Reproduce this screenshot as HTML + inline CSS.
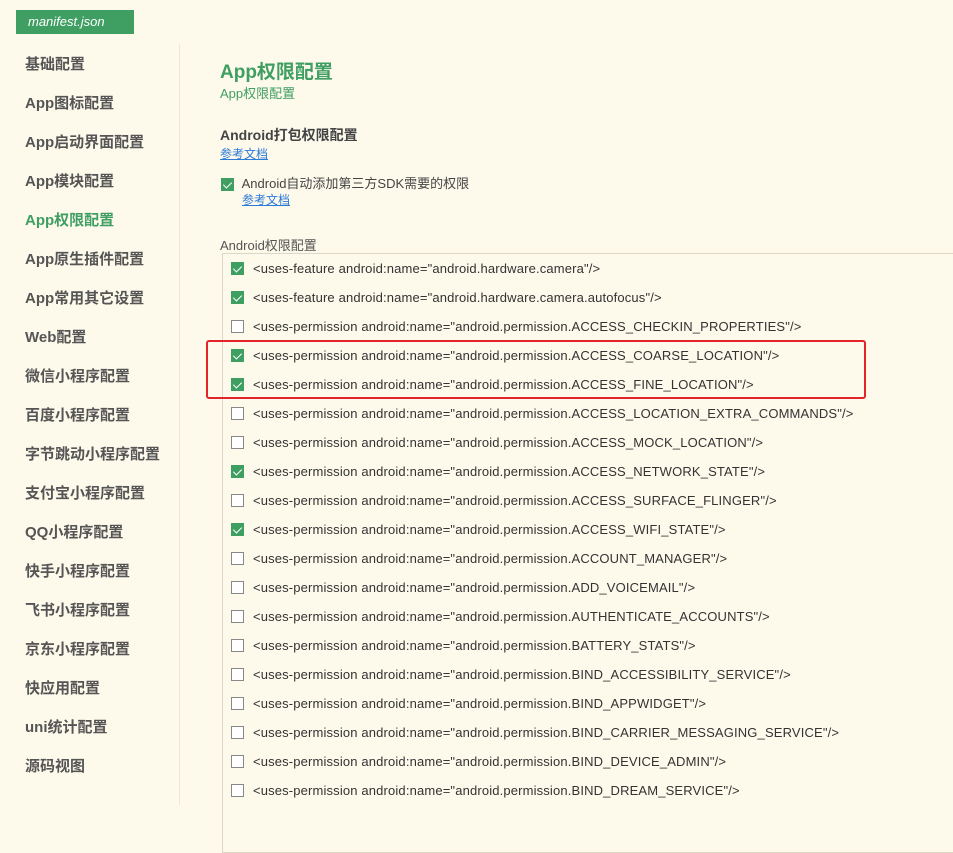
<!DOCTYPE html>
<html><head><meta charset="utf-8"><style>
body{margin:0;width:953px;height:805px;overflow:hidden;background:#fdf9eb;font-family:"Liberation Sans","Noto Sans CJK SC",sans-serif;position:relative;color:#333}
.tab{position:absolute;left:16px;top:10px;width:118px;height:24px;background:#3f9e62;color:#fff;font-style:italic;font-size:13px;line-height:24px;padding-left:12px;box-sizing:border-box}
.side{position:absolute;left:25px;top:54px}
.side div{height:39px;line-height:21px;font-size:15px;font-weight:bold;color:#555}
.side .on{color:#3f9e62}
.vl{position:absolute;left:179px;top:44px;width:1px;height:761px;background:#eee8d6}
.a{position:absolute;font-size:13px}
.lk{color:#2a7ad8;text-decoration:underline;font-size:12px}
.cb{display:inline-block;width:13px;height:13px;box-sizing:border-box;border:1px solid #888;background:#fff;vertical-align:middle;position:relative}
.cb.c{background:#3f9e62;border-color:#3f9e62}
.cb.c:after{content:"";position:absolute;left:3px;top:1px;width:4px;height:7px;border:solid #fff;border-width:0 1.5px 1.5px 0;transform:rotate(45deg)}
.box{position:absolute;left:222px;top:253px;width:760px;height:600px;border:1px solid #ddd8c4;box-sizing:border-box}
.row{position:absolute;left:231px;height:16px;font-size:13px;line-height:16px;white-space:nowrap;color:#333;letter-spacing:0.15px}
.row .cb{position:absolute;left:0;top:1px}
.row span.t{position:absolute;left:22px;top:0}
.red{position:absolute;left:206px;top:340px;width:660px;height:59px;border:2px solid #e3252b;border-radius:3px;box-sizing:border-box}
</style></head><body>
<div class="tab">manifest.json</div>
<div class="vl"></div>
<div class="side">
<div>基础配置</div><div>App图标配置</div><div>App启动界面配置</div><div>App模块配置</div><div class="on">App权限配置</div><div>App原生插件配置</div><div>App常用其它设置</div><div>Web配置</div><div>微信小程序配置</div><div>百度小程序配置</div><div>字节跳动小程序配置</div><div>支付宝小程序配置</div><div>QQ小程序配置</div><div>快手小程序配置</div><div>飞书小程序配置</div><div>京东小程序配置</div><div>快应用配置</div><div>uni统计配置</div><div>源码视图</div>
</div>
<div class="a" style="left:220px;top:57px;font-size:19px;font-weight:bold;color:#3f9e62">App权限配置</div>
<div class="a" style="left:220px;top:83px;color:#3f9e62">App权限配置</div>
<div class="a" style="left:220px;top:125px;font-size:14px;font-weight:bold;color:#444">Android打包权限配置</div>
<div class="a" style="left:220px;top:145px"><span class="lk">参考文档</span></div>
<div class="a" style="left:221px;top:173px;color:#444"><span class="cb c"></span> <span style="margin-left:4px">Android自动添加第三方SDK需要的权限</span></div>
<div class="a" style="left:242px;top:191px"><span class="lk">参考文档</span></div>
<div class="a" style="left:220px;top:235px;color:#555">Android权限配置</div>
<div class="box"></div>
<div id="rows"></div>
<div class="red"></div>
<script>
var items=[[1,'<uses-feature android:name="android.hardware.camera"/>'],[1,'<uses-feature android:name="android.hardware.camera.autofocus"/>'],[0,'ACCESS_CHECKIN_PROPERTIES'],[1,'ACCESS_COARSE_LOCATION'],[1,'ACCESS_FINE_LOCATION'],[0,'ACCESS_LOCATION_EXTRA_COMMANDS'],[0,'ACCESS_MOCK_LOCATION'],[1,'ACCESS_NETWORK_STATE'],[0,'ACCESS_SURFACE_FLINGER'],[1,'ACCESS_WIFI_STATE'],[0,'ACCOUNT_MANAGER'],[0,'ADD_VOICEMAIL'],[0,'AUTHENTICATE_ACCOUNTS'],[0,'BATTERY_STATS'],[0,'BIND_ACCESSIBILITY_SERVICE'],[0,'BIND_APPWIDGET'],[0,'BIND_CARRIER_MESSAGING_SERVICE'],[0,'BIND_DEVICE_ADMIN'],[0,'BIND_DREAM_SERVICE']];
var h='';items.forEach(function(it,i){var t=it[1].charAt(0)=='<'?it[1]:'<uses-permission android:name="android.permission.'+it[1]+'"/>';t=t.replace(/</g,'&lt;').replace(/>/g,'&gt;');h+='<div class="row" style="top:'+(261+i*29)+'px"><span class="cb'+(it[0]?' c':'')+'"></span><span class="t">'+t+'</span></div>';});
document.getElementById('rows').innerHTML=h;
</script>
</body></html>
